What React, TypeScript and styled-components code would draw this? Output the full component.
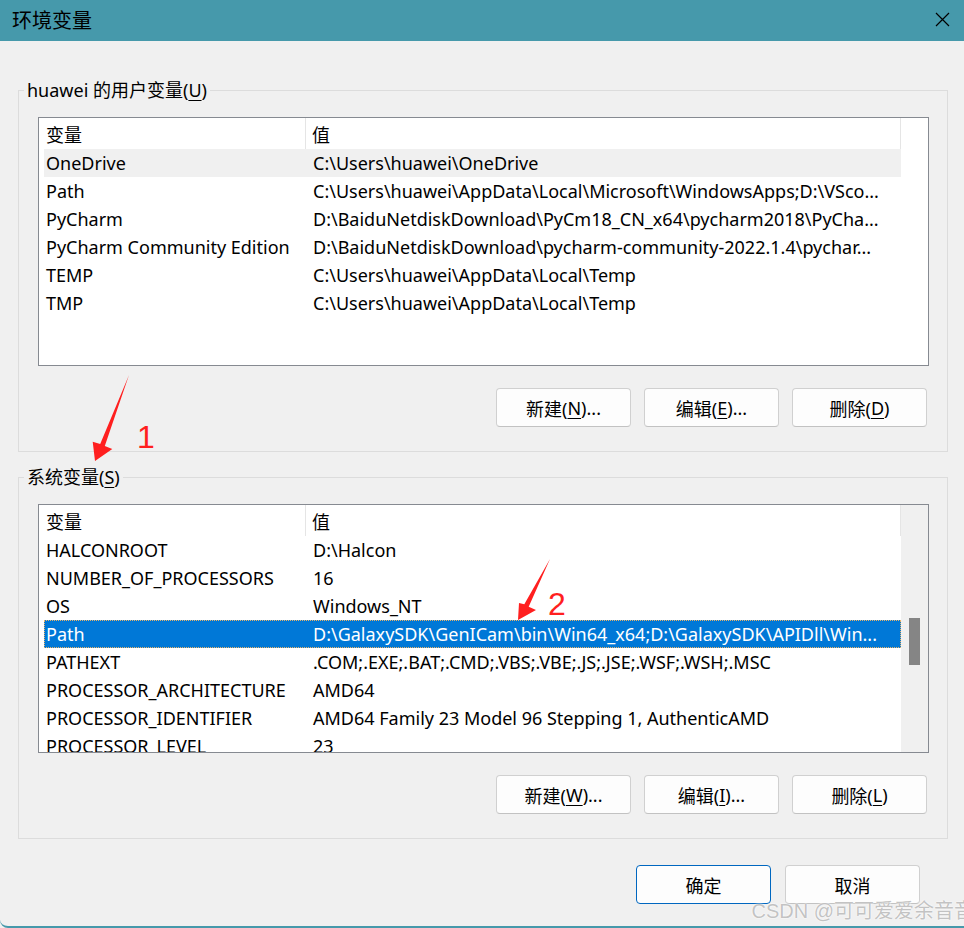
import styled, { createGlobalStyle } from 'styled-components';

const GlobalStyle = createGlobalStyle`
  html, body {
    margin: 0;
    padding: 0;
  }
  body {
    background: #f0f0f0;
    font-family: "Noto Sans", "Noto Sans CJK SC", sans-serif;
    color: #000;
  }
`;

const TEAL = '#4699ab';

const Window = styled.div`
  position: relative;
  width: 964px;
  height: 928px;
  box-sizing: border-box;
  background: #f0f0f0;
  border-bottom: 2px solid ${TEAL};
  border-bottom-left-radius: 8px;
  overflow: hidden;
  display: flex;
  flex-direction: column;
`;

const TitleBar = styled.div`
  flex: none;
  height: 41px;
  background: ${TEAL};
  display: flex;
  align-items: center;
  justify-content: space-between;
  padding: 0 14px 0 12px;
`;

const Title = styled.span`
  font-family: "Noto Sans CJK SC", sans-serif;
  font-size: 20px;
  line-height: 1;
  margin-top: -1px;
`;

const CloseButton = styled.div`
  width: 16px;
  height: 16px;
  margin-top: -3px;
  display: flex;
  align-items: center;
  justify-content: center;
`;

const Body = styled.div`
  flex: 1;
  display: flex;
  flex-direction: column;
  padding: 0 16px 0 18px;
`;

const Group = styled.fieldset<{ $top: number }>`
  margin: ${({ $top }) => $top}px 0 0 0;
  padding: 0 0 24px 0;
  min-width: 0;
  border: 1px solid #dcdcdc;
  display: flex;
  flex-direction: column;
`;

const Legend = styled.legend`
  margin-left: 5px;
  padding: 0 3px;
  font-size: 18px;
  line-height: 24px;
  white-space: nowrap;
`;

const Key = styled.span`
  text-decoration: underline;
  text-underline-offset: 3px;
  text-decoration-thickness: 1px;
`;

const ListView = styled.div`
  margin: 15px 18px 0 19px;
  height: 249px;
  box-sizing: border-box;
  border: 1px solid #868a91;
  background: #fff;
  display: flex;
  overflow: hidden;
`;

const ListMain = styled.div`
  flex: 1;
  min-width: 0;
  display: flex;
  flex-direction: column;
`;

const Header = styled.div`
  flex: none;
  height: 31px;
  display: grid;
  grid-template-columns: 267px 1fr;
`;

const HeaderCell = styled.div<{ $pad: number }>`
  display: flex;
  align-items: center;
  padding-left: ${({ $pad }) => $pad}px;
  border-right: 1px solid #e5e5e5;
  font-size: 18px;
`;

const Rows = styled.div`
  flex: 1;
  overflow: hidden;
  padding-left: 5px;
`;

const Row = styled.div<{ $state?: 'inactive' | 'selected' }>`
  height: 28px;
  box-sizing: border-box;
  display: grid;
  grid-template-columns: 262px 1fr;
  align-items: center;
  font-size: 18px;
  white-space: nowrap;
  background: ${({ $state }) =>
    $state === 'selected' ? '#0078d7' : $state === 'inactive' ? '#f0f0f0' : 'transparent'};
  color: ${({ $state }) => ($state === 'selected' ? '#fff' : '#000')};
  border: 1px ${({ $state }) => ($state === 'selected' ? 'dotted #e8b36a' : 'solid transparent')};
`;

const Cell = styled.div<{ $pad: number }>`
  padding-left: ${({ $pad }) => $pad}px;
  padding-right: 2px;
  overflow: hidden;
  text-overflow: ellipsis;
  line-height: 26px;
`;

const ScrollTrack = styled.div<{ $shown: boolean }>`
  flex: none;
  width: 27px;
  background: ${({ $shown }) => ($shown ? '#f0f0f0' : '#fff')};
  display: flex;
  flex-direction: column;
  align-items: flex-start;
`;

const Thumb = styled.div`
  width: 11px;
  height: 47px;
  margin-left: 8px;
  background: #858585;
`;

const ButtonRow = styled.div<{ $top: number; $right: number }>`
  display: flex;
  justify-content: flex-end;
  gap: 13px;
  margin-top: ${({ $top }) => $top}px;
  padding-right: ${({ $right }) => $right}px;
`;

const Button = styled.button<{ $primary?: boolean }>`
  width: 135px;
  height: 39px;
  box-sizing: border-box;
  border: 1px solid ${({ $primary }) => ($primary ? '#0067c0' : '#d0d0d0')};
  border-bottom-color: ${({ $primary }) => ($primary ? '#0067c0' : '#c2c2c2')};
  border-radius: 4px;
  background: #fdfdfd;
  color: #000;
  font-family: "Noto Sans", "Noto Sans CJK SC", sans-serif;
  font-size: 18px;
  padding: 0;
  display: flex;
  align-items: center;
  justify-content: center;
`;

const Footer = styled(ButtonRow)`
  gap: 14px;
`;

const Overlay = styled.svg`
  position: absolute;
  left: 0;
  top: 0;
  pointer-events: none;
`;

const Marker = styled.span<{ $x: number; $y: number }>`
  position: absolute;
  left: ${({ $x }) => $x}px;
  top: ${({ $y }) => $y}px;
  font-family: "Liberation Sans", Arial, sans-serif;
  font-size: 32px;
  line-height: 1;
  color: #ff1f1f;
`;

const Watermark = styled.span`
  position: absolute;
  right: -10px;
  bottom: 2px;
  font-family: "Liberation Sans", "Noto Sans CJK SC", sans-serif;
  font-size: 20px;
  white-space: nowrap;
  color: rgba(175, 175, 175, 0.75);
  text-shadow: 0 0 1px #fff, 0 0 2px #fff;
`;

type Variable = { name: string; value: string; state?: 'inactive' | 'selected' };

const userVars: Variable[] = [
  { name: 'OneDrive', value: 'C:\\Users\\huawei\\OneDrive', state: 'inactive' },
  { name: 'Path', value: 'C:\\Users\\huawei\\AppData\\Local\\Microsoft\\WindowsApps;D:\\VSco...' },
  { name: 'PyCharm', value: 'D:\\BaiduNetdiskDownload\\PyCm18_CN_x64\\pycharm2018\\PyCha...' },
  { name: 'PyCharm Community Edition', value: 'D:\\BaiduNetdiskDownload\\pycharm-community-2022.1.4\\pychar...' },
  { name: 'TEMP', value: 'C:\\Users\\huawei\\AppData\\Local\\Temp' },
  { name: 'TMP', value: 'C:\\Users\\huawei\\AppData\\Local\\Temp' },
];

const systemVars: Variable[] = [
  { name: 'HALCONROOT', value: 'D:\\Halcon' },
  { name: 'NUMBER_OF_PROCESSORS', value: '16' },
  { name: 'OS', value: 'Windows_NT' },
  { name: 'Path', value: 'D:\\GalaxySDK\\GenICam\\bin\\Win64_x64;D:\\GalaxySDK\\APIDll\\Win...', state: 'selected' },
  { name: 'PATHEXT', value: '.COM;.EXE;.BAT;.CMD;.VBS;.VBE;.JS;.JSE;.WSF;.WSH;.MSC' },
  { name: 'PROCESSOR_ARCHITECTURE', value: 'AMD64' },
  { name: 'PROCESSOR_IDENTIFIER', value: 'AMD64 Family 23 Model 96 Stepping 1, AuthenticAMD' },
  { name: 'PROCESSOR_LEVEL', value: '23' },
];

function VariableList({ items, thumbTop }: { items: Variable[]; thumbTop?: number }) {
  return (
    <ListView>
      <ListMain>
        <Header>
          <HeaderCell $pad={7}>变量</HeaderCell>
          <HeaderCell $pad={6}>值</HeaderCell>
        </Header>
        <Rows>
          {items.map((v) => (
            <Row key={v.name} $state={v.state}>
              <Cell $pad={1}>{v.name}</Cell>
              <Cell $pad={6}>{v.value}</Cell>
            </Row>
          ))}
        </Rows>
      </ListMain>
      <ScrollTrack $shown={thumbTop !== undefined}>
        {thumbTop !== undefined && <Thumb style={{ marginTop: thumbTop }} />}
      </ScrollTrack>
    </ListView>
  );
}

export default function App() {
  return (
    <>
      <GlobalStyle />
      <Window>
        <TitleBar>
          <Title>环境变量</Title>
          <CloseButton>
            <svg width="15" height="15" viewBox="0 0 15 15">
              <path d="M1 1 L14 14 M14 1 L1 14" stroke="#000" strokeWidth="1.2" fill="none" />
            </svg>
          </CloseButton>
        </TitleBar>
        <Body>
          <Group $top={37}>
            <Legend>
              huawei 的用户变量(<Key>U</Key>)
            </Legend>
            <VariableList items={userVars} />
            <ButtonRow $top={22} $right={20}>
              <Button>新建(<Key>N</Key>)...</Button>
              <Button>编辑(<Key>E</Key>)...</Button>
              <Button>删除(<Key>D</Key>)</Button>
            </ButtonRow>
          </Group>
          <Group $top={13}>
            <Legend>
              系统变量(<Key>S</Key>)
            </Legend>
            <VariableList items={systemVars} thumbTop={113} />
            <ButtonRow $top={22} $right={20}>
              <Button>新建(<Key>W</Key>)...</Button>
              <Button>编辑(<Key>I</Key>)...</Button>
              <Button>删除(<Key>L</Key>)</Button>
            </ButtonRow>
          </Group>
          <Footer $top={26} $right={28}>
            <Button $primary>确定</Button>
            <Button>取消</Button>
          </Footer>
        </Body>

        <Overlay width="964" height="928" viewBox="0 0 964 928">
          <polygon
            points="129,375 104.8,446 112.3,449 95,461 92.7,441.7 100.2,444.1"
            fill="#ff1f1f"
          />
          <polygon
            points="550,559 528.7,606.7 536,610 518,620 519,603 524.3,604.3"
            fill="#ff1f1f"
          />
        </Overlay>
        <Marker $x={137} $y={421}>1</Marker>
        <Marker $x={548} $y={588}>2</Marker>
        <Watermark>CSDN @可可爱爱余音音</Watermark>
      </Window>
    </>
  );
}
